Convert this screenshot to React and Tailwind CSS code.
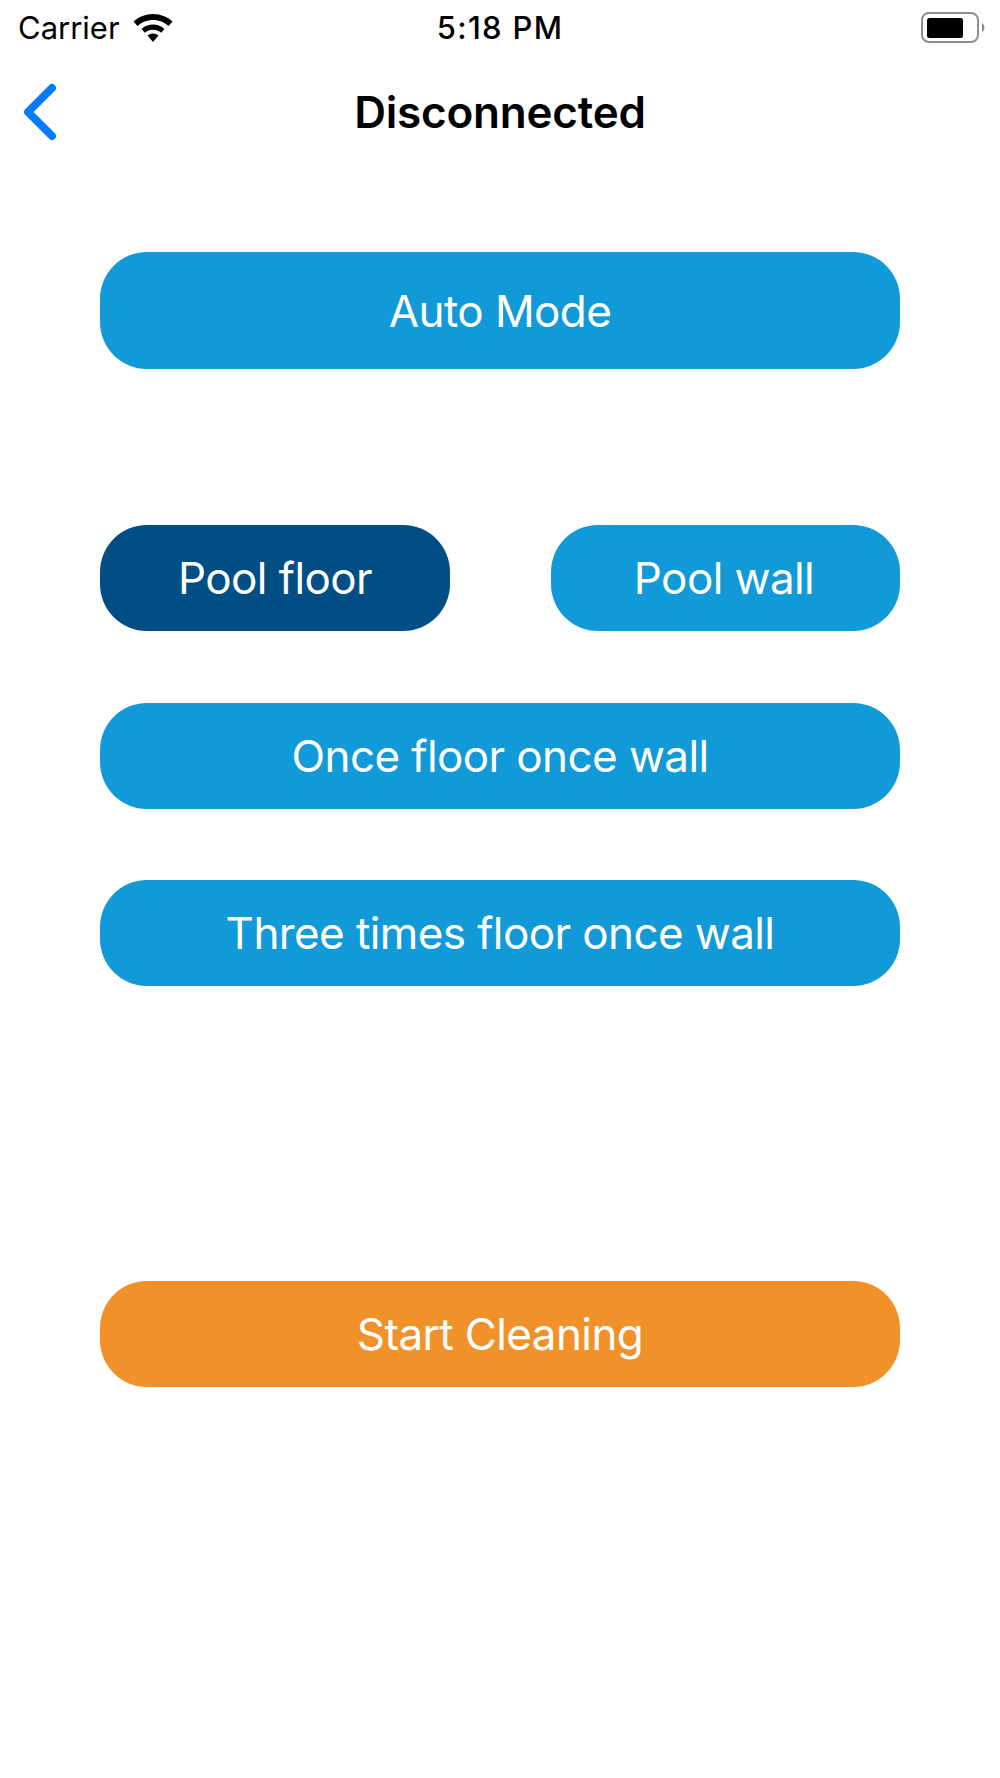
import React from "react";

const ModeButton = ({ label, className = "" }) => (
    <button className={`h-[106px] rounded-[47px] text-white text-[44px] tracking-[-0.6px] flex items-center justify-center ${className}`}>
        {label}
    </button>
);

const Wifi = () => (
    <svg width="40" height="30" viewBox="0 0 40 30" fill="#000">
        <path d="M20 1C12.500 1 6 3.800 0.500 8.500L4.500 13C8.500 9.200 14 7 20 7C26 7 31.500 9.200 35.500 13L39.500 8.500C34 3.800 27.500 1 20 1Z" />
        <path d="M20 11.500C15.500 11.500 11.500 13.100 8.500 16L11.800 19.800C14 17.800 16.900 16.700 20 16.700C23.100 16.700 26 17.800 28.200 19.800L31.500 16C28.500 13.100 24.500 11.500 20 11.500Z" />
        <path d="M20 20.500C17.800 20.500 15.900 21.300 14.500 22.600L20 29L25.500 22.600C24.100 21.300 22.200 20.500 20 20.500Z" />
    </svg>
);

const Battery = () => (
    <svg width="64" height="32" viewBox="0 0 64 32" fill="none">
        <rect x="1" y="1" width="56" height="29" rx="7" stroke="#8e8e8e" strokeWidth="2" />
        <rect x="6" y="6" width="36" height="20" rx="2.500" fill="#000" />
        <path d="M61 11C62.500 12 63.500 13.500 63.500 15.500C63.500 17.500 62.500 19 61 20Z" fill="#8e8e8e" />
    </svg>
);

const App = () => {
    return (
        <div className="w-[1000px] h-[1778px] bg-white font-['Inter','Liberation_Sans',sans-serif]">
            {/* status bar */}
            <div className="h-[56px] pl-[18px] pr-[15px] grid grid-cols-3 items-center text-black">
                <div className="flex items-center gap-[13px] text-[31px] font-normal">
                    <span>Carrier</span>
                    <Wifi />
                </div>
                <div className="text-center text-[31px] tracking-[1.3px] font-medium pr-[3px]">5:18 PM</div>
                <div className="flex justify-end">
                    <Battery />
                </div>
            </div>

            {/* nav */}
            <div className="h-[112px] relative flex items-center justify-center">
                <svg className="absolute left-[20px] top-[25px]" width="40" height="62" viewBox="0 0 40 62" fill="none">
                    <path d="M32 7L8 31L32 55" stroke="#007aff" strokeWidth="8" strokeLinecap="round" strokeLinejoin="round" />
                </svg>
                <div className="text-[44px] font-semibold tracking-[-0.2px] text-black">Disconnected</div>
            </div>

            <div className="px-[100px] pt-[84px] flex flex-col">
                <ModeButton label="Auto Mode" className="h-[117px] bg-[#119ad7]" />
                <div className="flex justify-between mt-[156px]">
                    <ModeButton label="Pool floor" className="w-[350px] bg-[#014e85]" />
                    <ModeButton label="Pool wall" className="w-[349px] pr-[3px] bg-[#119ad7]" />
                </div>
                <ModeButton label="Once floor once wall" className="mt-[72px] bg-[#119ad7]" />
                <ModeButton label="Three times floor once wall" className="mt-[71px] bg-[#119ad7]" />
                <ModeButton label="Start Cleaning" className="mt-[295px] bg-[#f1912a]" />
            </div>
        </div>
    );
};

export default App;
